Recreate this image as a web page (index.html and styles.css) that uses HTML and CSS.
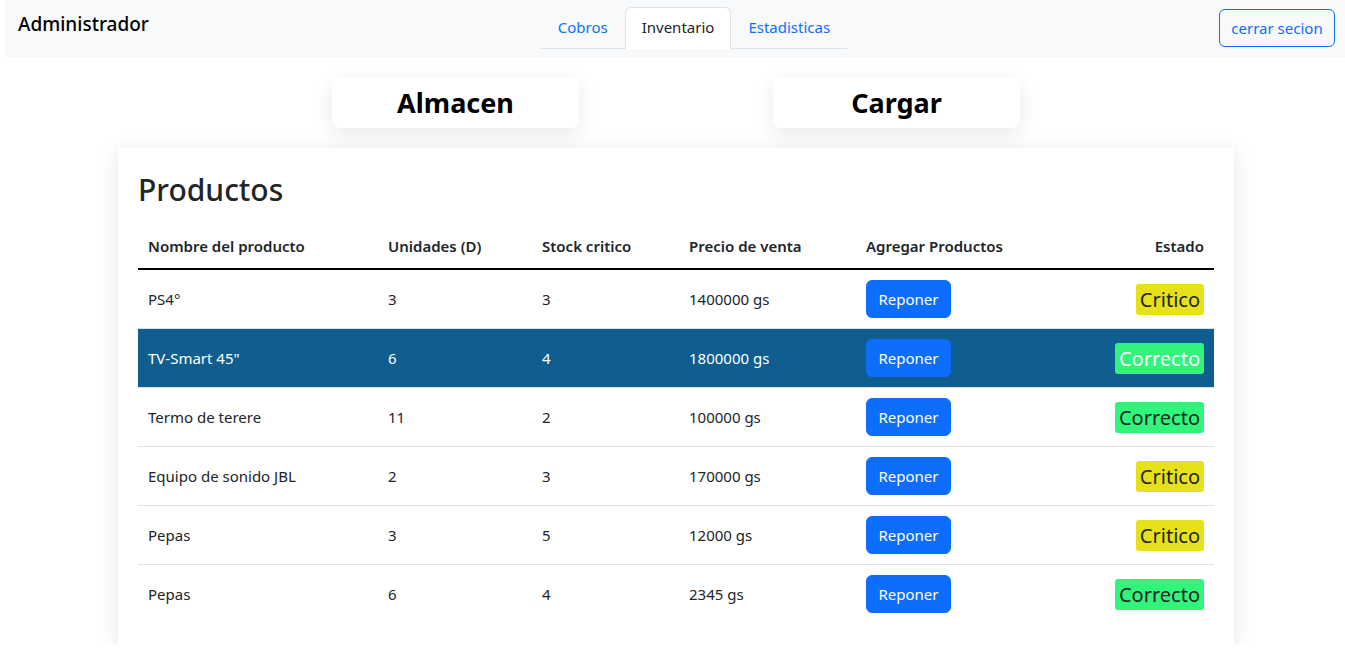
FILE: index.html
```html
<!DOCTYPE html>
<html lang="es">
<head>
<meta charset="utf-8">
<title>Inventario</title>
<link rel="stylesheet" href="styles.css">
</head>
<body>
<nav class="navbar">
  <div class="brand">Administrador</div>
  <ul class="tabs">
    <li><a class="tab">Cobros</a></li>
    <li><a class="tab active">Inventario</a></li>
    <li><a class="tab">Estadisticas</a></li>
  </ul>
  <button class="btn-outline">cerrar secion</button>
</nav>

<div class="actions">
  <div class="action-box">Almacen</div>
  <div class="action-box">Cargar</div>
</div>

<section class="card">
  <h1 class="card-title">Productos</h1>
  <table class="table">
    <thead>
      <tr>
        <th class="c1">Nombre del producto</th>
        <th class="c2">Unidades (D)</th>
        <th class="c3">Stock critico</th>
        <th class="c4">Precio de venta</th>
        <th class="c5">Agregar Productos</th>
        <th class="c6">Estado</th>
      </tr>
    </thead>
    <tbody>
      <tr>
        <td>PS4°</td><td>3</td><td>3</td><td>1400000 gs</td>
        <td><button class="btn-primary">Reponer</button></td>
        <td class="c6"><span class="badge critico">Critico</span></td>
      </tr>
      <tr class="selected">
        <td>TV-Smart 45"</td><td>6</td><td>4</td><td>1800000 gs</td>
        <td><button class="btn-primary">Reponer</button></td>
        <td class="c6"><span class="badge correcto">Correcto</span></td>
      </tr>
      <tr>
        <td>Termo de terere</td><td>11</td><td>2</td><td>100000 gs</td>
        <td><button class="btn-primary">Reponer</button></td>
        <td class="c6"><span class="badge correcto">Correcto</span></td>
      </tr>
      <tr>
        <td>Equipo de sonido JBL</td><td>2</td><td>3</td><td>170000 gs</td>
        <td><button class="btn-primary">Reponer</button></td>
        <td class="c6"><span class="badge critico">Critico</span></td>
      </tr>
      <tr>
        <td>Pepas</td><td>3</td><td>5</td><td>12000 gs</td>
        <td><button class="btn-primary">Reponer</button></td>
        <td class="c6"><span class="badge critico">Critico</span></td>
      </tr>
      <tr>
        <td>Pepas</td><td>6</td><td>4</td><td>2345 gs</td>
        <td><button class="btn-primary">Reponer</button></td>
        <td class="c6"><span class="badge correcto">Correcto</span></td>
      </tr>
    </tbody>
  </table>
</section>
</body>
</html>
```

FILE: styles.css
```css
* { box-sizing: border-box; }

html, body {
  margin: 0;
  padding: 0;
  background: #fff;
}

body {
  font-family: "Noto Sans", "Open Sans", "Liberation Sans", sans-serif;
  font-size: 15px;
  color: #212529;
  overflow: hidden;
}

.navbar {
  margin-left: 5px;
  height: 57px;
  background: #f8f9fa;
  display: flex;
  align-items: flex-start;
  padding: 0 10px 0 13px;
}

.brand {
  margin-top: 11px;
  font-size: 19px;
  font-weight: 500;
  color: #000;
  line-height: 26px;
}

.tabs {
  list-style: none;
  margin: 7px auto 0 auto;
  position: relative;
  left: 10px;
  padding: 0;
  display: flex;
  border-bottom: 1px solid #dee2e6;
  height: 42px;
}

.tabs li { margin-bottom: -1px; }

.tab {
  display: block;
  height: 42px;
  padding: 7px 16px;
  line-height: 25px;
  font-size: 15px;
  color: #0d6efd;
  border: 1px solid transparent;
  border-top-left-radius: 6px;
  border-top-right-radius: 6px;
}

.tab.active {
  color: #212529;
  background: #fff;
  border-color: #dee2e6 #dee2e6 #fff;
}

.btn-outline {
  margin-top: 9px;
  font-family: inherit;
  font-size: 15px;
  height: 38px;
  width: 116px;
  padding: 0;
  color: #0d6efd;
  background: transparent;
  border: 1px solid #0d6efd;
  border-radius: 6px;
}

.actions {
  display: flex;
  justify-content: center;
  gap: 194px;
  padding-left: 7px;
  margin-top: 20px;
}

.action-box {
  width: 247px;
  height: 51px;
  background: #fff;
  border-radius: 8px;
  box-shadow: 0 6px 20px rgba(0, 0, 0, 0.09);
  display: flex;
  align-items: center;
  justify-content: center;
  font-size: 27px;
  font-weight: 700;
  color: #000;
}

.card {
  margin: 20px 0 0 118px;
  width: 1116px;
  height: 496px;
  background: #fff;
  box-shadow: 0 4px 20px rgba(0, 0, 0, 0.11);
  padding: 20px 20px;
}

.card-title {
  margin: 0 0 15px 0;
  font-size: 30px;
  font-weight: 500;
  line-height: 44px;
  color: #212529;
}

.table {
  width: 100%;
  border-collapse: collapse;
}

.table th {
  text-align: left;
  font-weight: 600;
  font-size: 15px;
  padding: 7px 10px 9px;
  line-height: 25px;
  border-bottom: 2px solid #000;
}

.table td {
  padding: 10px 10px;
  height: 59px;
  border-bottom: 1px solid #dee2e6;
  font-size: 15px;
  vertical-align: middle;
}

.table tbody tr:last-child td { border-bottom: none; }

.c1 { width: 240px; }
.c2 { width: 154px; }
.c3 { width: 147px; }
.c4 { width: 177px; }
.table .c6 { text-align: right; }

.selected td {
  background: #0f5e8f;
  color: #fff;
}

.btn-primary {
  font-family: inherit;
  font-size: 15px;
  height: 38px;
  width: 85px;
  background: #0d6efd;
  color: #fff;
  border: 1px solid #0d6efd;
  border-radius: 6px;
  padding: 0;
}

.badge {
  display: inline-block;
  font-size: 20px;
  line-height: 31px;
  height: 31px;
  padding: 0 4px;
  border-radius: 3px;
  color: #212529;
}

.critico { background: #e6e11a; }
.correcto { background: #31f57a; }
.selected .correcto { color: #fff; }
```
